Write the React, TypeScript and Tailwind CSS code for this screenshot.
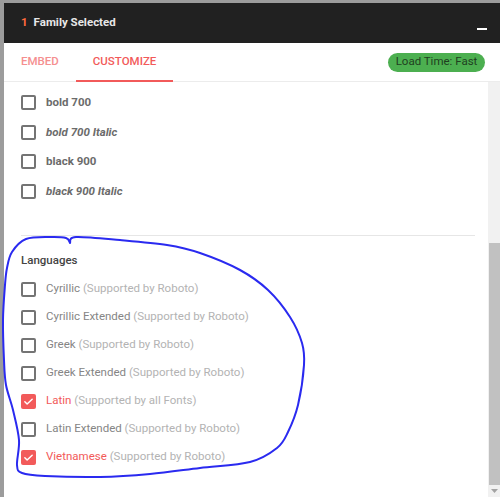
import React from 'react';

const weights = [
  { label: 'bold 700', italic: false },
  { label: 'bold 700 Italic', italic: true },
  { label: 'black 900', italic: false },
  { label: 'black 900 Italic', italic: true },
];

const languages = [
  { name: 'Cyrillic', note: '(Supported by Roboto)', checked: false },
  { name: 'Cyrillic Extended', note: '(Supported by Roboto)', checked: false },
  { name: 'Greek', note: '(Supported by Roboto)', checked: false },
  { name: 'Greek Extended', note: '(Supported by Roboto)', checked: false },
  { name: 'Latin', note: '(Supported by all Fonts)', checked: true },
  { name: 'Latin Extended', note: '(Supported by Roboto)', checked: false },
  { name: 'Vietnamese', note: '(Supported by Roboto)', checked: true },
];

// hand drawn marker loop around the languages block
const loop: [number, number][] = [
  [70, 243], [76, 237], [120, 240], [167, 245], [200, 253], [240, 270], [268, 290],
  [290, 317], [302, 343], [304, 365], [298, 405], [288, 432], [277, 448], [250, 462],
  [200, 468], [150, 474], [100, 477], [45, 476], [22, 473], [17, 465], [19, 440],
  [13, 410], [6, 385], [4, 360], [3, 320], [5, 285], [7, 268], [12, 252], [26, 239],
  [50, 237], [66, 238], [70, 243],
];

function smooth(pts: [number, number][]) {
  let d = `M ${pts[0][0]} ${pts[0][1]}`;
  for (let i = 0; i < pts.length - 1; i++) {
    const p0 = pts[i - 1] || pts[i];
    const p1 = pts[i];
    const p2 = pts[i + 1];
    const p3 = pts[i + 2] || p2;
    const c1x = p1[0] + (p2[0] - p0[0]) / 6;
    const c1y = p1[1] + (p2[1] - p0[1]) / 6;
    const c2x = p2[0] - (p3[0] - p1[0]) / 6;
    const c2y = p2[1] - (p3[1] - p1[1]) / 6;
    d += ` C ${c1x} ${c1y} ${c2x} ${c2y} ${p2[0]} ${p2[1]}`;
  }
  return d;
}

const Box = ({ checked }: { checked: boolean }) =>
  checked ? (
    <span className="flex h-[15px] w-[15px] items-center justify-center rounded-[2px] bg-[#f25a5a]">
      <svg width="11" height="11" viewBox="0 0 24 24" fill="none" stroke="white" strokeWidth="3.2" strokeLinecap="round" strokeLinejoin="round">
        <path d="M4 12.5l5 5L20 7" />
      </svg>
    </span>
  ) : (
    <span className="h-[15px] w-[15px] rounded-[2px] border-2 border-[#747474]" />
  );

export default function App() {
  return (
    <div className="relative h-[497px] w-[500px] overflow-hidden bg-[#9c9c9c] font-['Roboto',sans-serif]">
      <div className="ml-[4px] mt-[3px] flex h-[494px] flex-col bg-white">
        <div className="flex h-[40px] shrink-0 items-center bg-[#212121] pl-[17px] pr-[13px]">
          <span className="text-[11.5px] font-bold text-[#ff6a3d]">1</span>
          <span className="ml-[6px] text-[11.5px] font-bold text-[#e8e8e8]">Family Selected</span>
          <span className="ml-auto mt-[12px] h-[2px] w-[10px] bg-white" />
        </div>
        <div className="flex h-[39px] shrink-0 items-stretch border-b border-[#ececec] pr-[15px]">
          <div className="flex items-center px-[17px] text-[11.5px] font-medium text-[#f58f8f]">EMBED</div>
          <div className="-mb-px flex items-center border-b-2 border-[#f25a5a] px-[17px] text-[11.5px] font-medium text-[#f25a5a]">
            CUSTOMIZE
          </div>
          <div className="ml-auto flex items-center">
            <span className="flex h-[19px] w-[97px] items-center justify-center rounded-full bg-[#4caf50] text-[11.5px] text-[#1f3f1f]">
              Load Time: Fast
            </span>
          </div>
        </div>
        <div className="flex min-h-0 flex-1">
          <div className="flex-1 pl-[17px] pr-[13px] pt-[6px]">
            {weights.map((w) => (
              <div key={w.label} className="flex h-[29.5px] items-center">
                <Box checked={false} />
                <span className={`ml-[10px] text-[11.5px] font-bold text-[#6b6b6b] ${w.italic ? 'italic' : ''}`}>{w.label}</span>
              </div>
            ))}
            <div className="mt-[29px] border-t border-[#e6e6e6]" />
            <div className="mt-[16px] mb-[7px] text-[11.5px] leading-[16px] font-medium text-[#444]">Languages</div>
            {languages.map((l) => (
              <div key={l.name} className="flex h-[28px] items-center">
                <Box checked={l.checked} />
                <span className="ml-[10px] text-[11.5px]">
                  <span className={l.checked ? 'text-[#f25a5a]' : 'text-[#858585]'}>{l.name}</span>{' '}
                  <span className="text-[#b3b3b3]">{l.note}</span>
                </span>
              </div>
            ))}
          </div>
          <div className="relative w-[12px] bg-[#f1f1f1]">
            <div className="absolute left-[1px] right-0 top-[161px] h-[242px] bg-[#c1c1c1]" />
            <svg className="absolute bottom-[3px] left-[3px]" width="7" height="5" viewBox="0 0 7 5">
              <path d="M0 0h7L3.5 4z" fill="#a3a3a3" />
            </svg>
          </div>
        </div>
      </div>
      <svg className="pointer-events-none absolute left-0 top-0" width="500" height="497">
        <path d={smooth(loop)} fill="none" stroke="#2a2af0" strokeWidth="2" strokeLinecap="round" />
      </svg>
    </div>
  );
}
